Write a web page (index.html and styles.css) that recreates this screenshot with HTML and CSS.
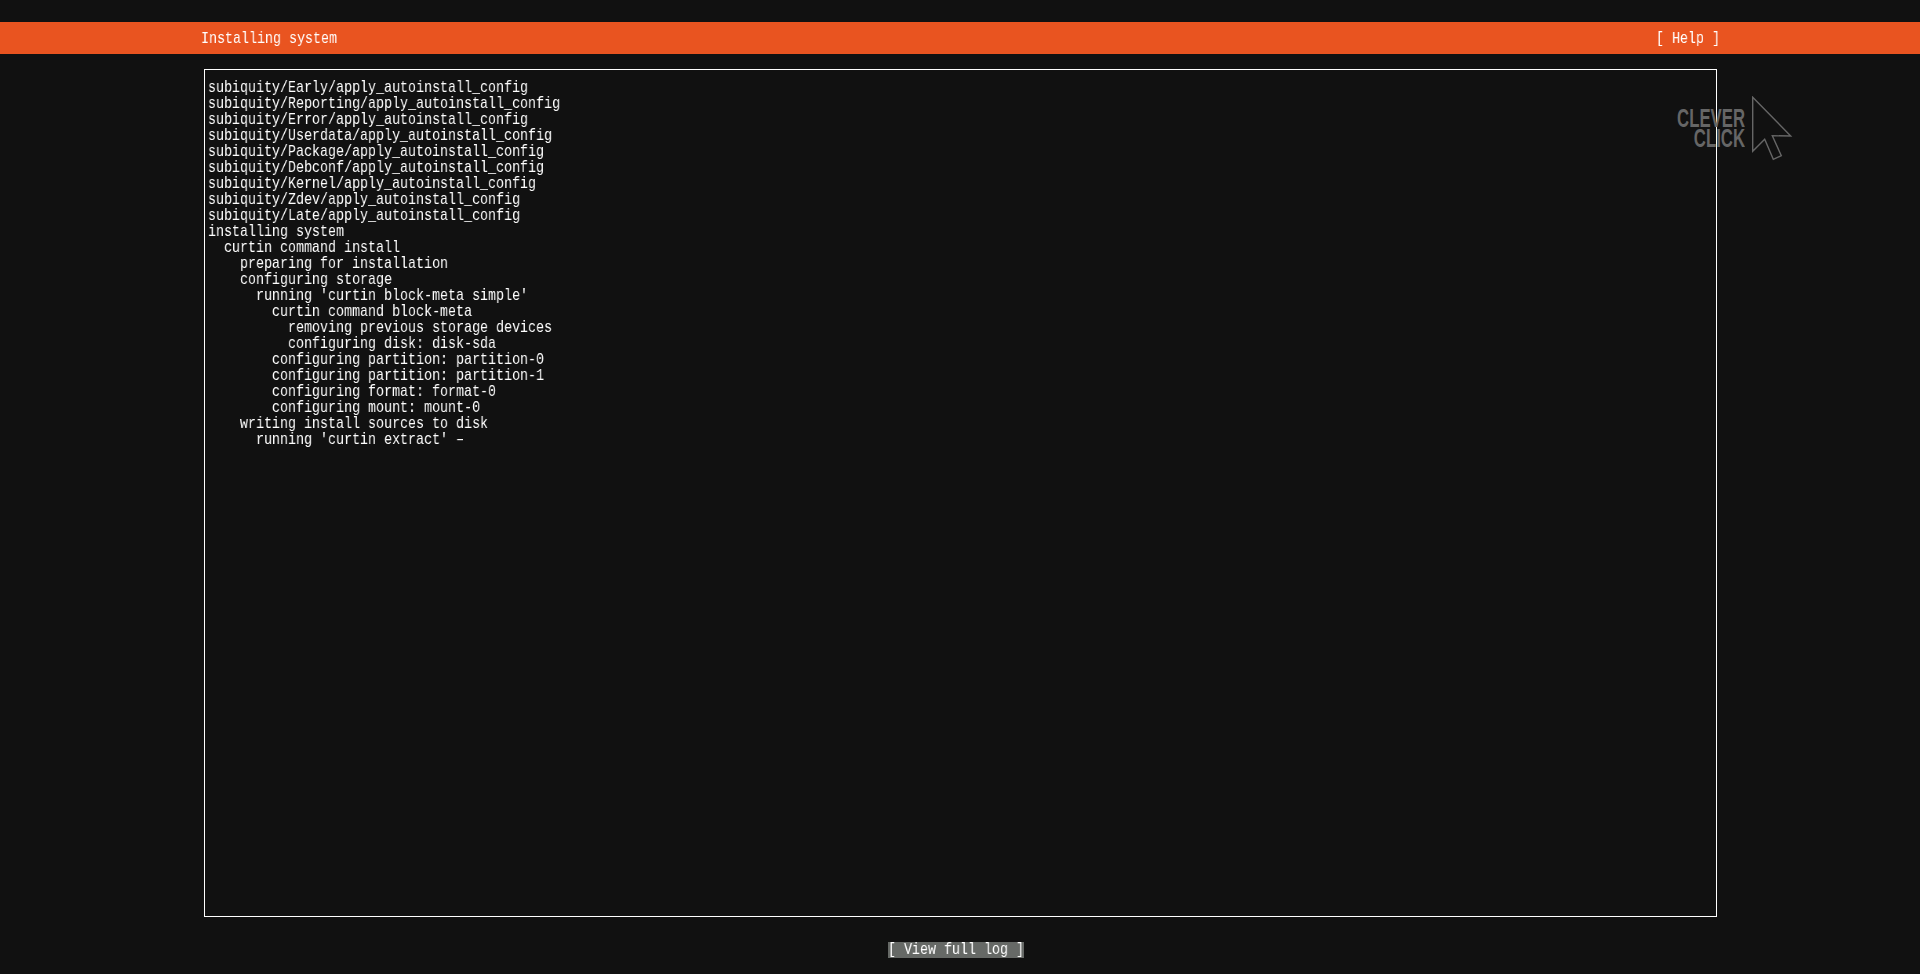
FILE: index.html
```html
<!DOCTYPE html>
<html lang="en">
<head>
<meta charset="utf-8">
<title>Installing system</title>
<link rel="stylesheet" href="styles.css">
</head>
<body>
<header class="title-bar">
  <span class="term title">Installing system</span>
  <span class="term help">[ Help ]</span>
</header>
<main class="log-box">
<pre class="term log">subiquity/Early/apply_autoinstall_config
subiquity/Reporting/apply_autoinstall_config
subiquity/Error/apply_autoinstall_config
subiquity/Userdata/apply_autoinstall_config
subiquity/Package/apply_autoinstall_config
subiquity/Debconf/apply_autoinstall_config
subiquity/Kernel/apply_autoinstall_config
subiquity/Zdev/apply_autoinstall_config
subiquity/Late/apply_autoinstall_config
installing system
  curtin command install
    preparing for installation
    configuring storage
      running 'curtin block-meta simple'
        curtin command block-meta
          removing previous storage devices
          configuring disk: disk-sda
        configuring partition: partition-0
        configuring partition: partition-1
        configuring format: format-0
        configuring mount: mount-0
    writing install sources to disk
      running 'curtin extract' –</pre>
</main>
<footer class="actions">
  <button class="view-log" type="button"><span class="term">[ View full log ]</span></button>
</footer>
<div class="watermark">
  <div class="wm-text">CLEVER<br>CLICK</div>
  <svg class="wm-cursor" width="42" height="66" viewBox="0 0 42 66" aria-hidden="true">
    <path d="M1.7 1.3 L39.7 40 L21.3 39.7 L30.3 59.7 L22.3 63.3 L13.7 43.3 L1.7 55.3 Z" fill="none" stroke="#666" stroke-width="1.4"/>
  </svg>
</div>
</body>
</html>
```
FILE: styles.css
```css
html, body {
  margin: 0;
  height: 100%;
  overflow: hidden;
}
body {
  background: #111111;
  color: #ffffff;
  font-family: "Liberation Mono", "DejaVu Sans Mono", monospace;
  font-size: 17px;
  line-height: 16px;
  position: relative;
}
.term {
  display: inline-block;
  transform: scaleX(0.7843);
  transform-origin: left center;
  white-space: pre;
  will-change: transform;
}
.title-bar {
  box-sizing: border-box;
  margin-top: 22px;
  height: 32px;
  background: #e95420;
  display: flex;
  align-items: center;
  padding: 2px 0 0 201px;
}
.title {
  width: 136px;
  flex: none;
}
.help {
  margin-left: 1319px;
  flex: none;
}
.log-box {
  box-sizing: border-box;
  margin: 15px 0 0 204px;
  width: 1513px;
  height: 848px;
  border: 1px solid #ffffff;
  padding: 10px 0 0 3px;
}
.log {
  margin: 0;
  font: inherit;
  display: block;
}
.actions {
  margin-top: 25px;
  padding-left: 888px;
}
.view-log {
  display: block;
  box-sizing: border-box;
  width: 136px;
  height: 16px;
  padding: 0;
  border: 0;
  background: #666966;
  color: #ffffff;
  font: inherit;
  text-align: left;
}
.watermark {
  position: absolute;
  left: 1643px;
  top: 96px;
  display: flex;
  align-items: flex-start;
  gap: 6px;
}
.wm-text {
  width: 102px;
  flex: none;
  margin-top: 12px;
  color: #666666;
  font-family: "Liberation Sans", Arial, sans-serif;
  font-weight: 700;
  font-size: 25px;
  line-height: 20px;
  text-align: right;
  transform: scaleX(0.67);
  transform-origin: right center;
}
.wm-cursor { display: block; flex: none; }
```
